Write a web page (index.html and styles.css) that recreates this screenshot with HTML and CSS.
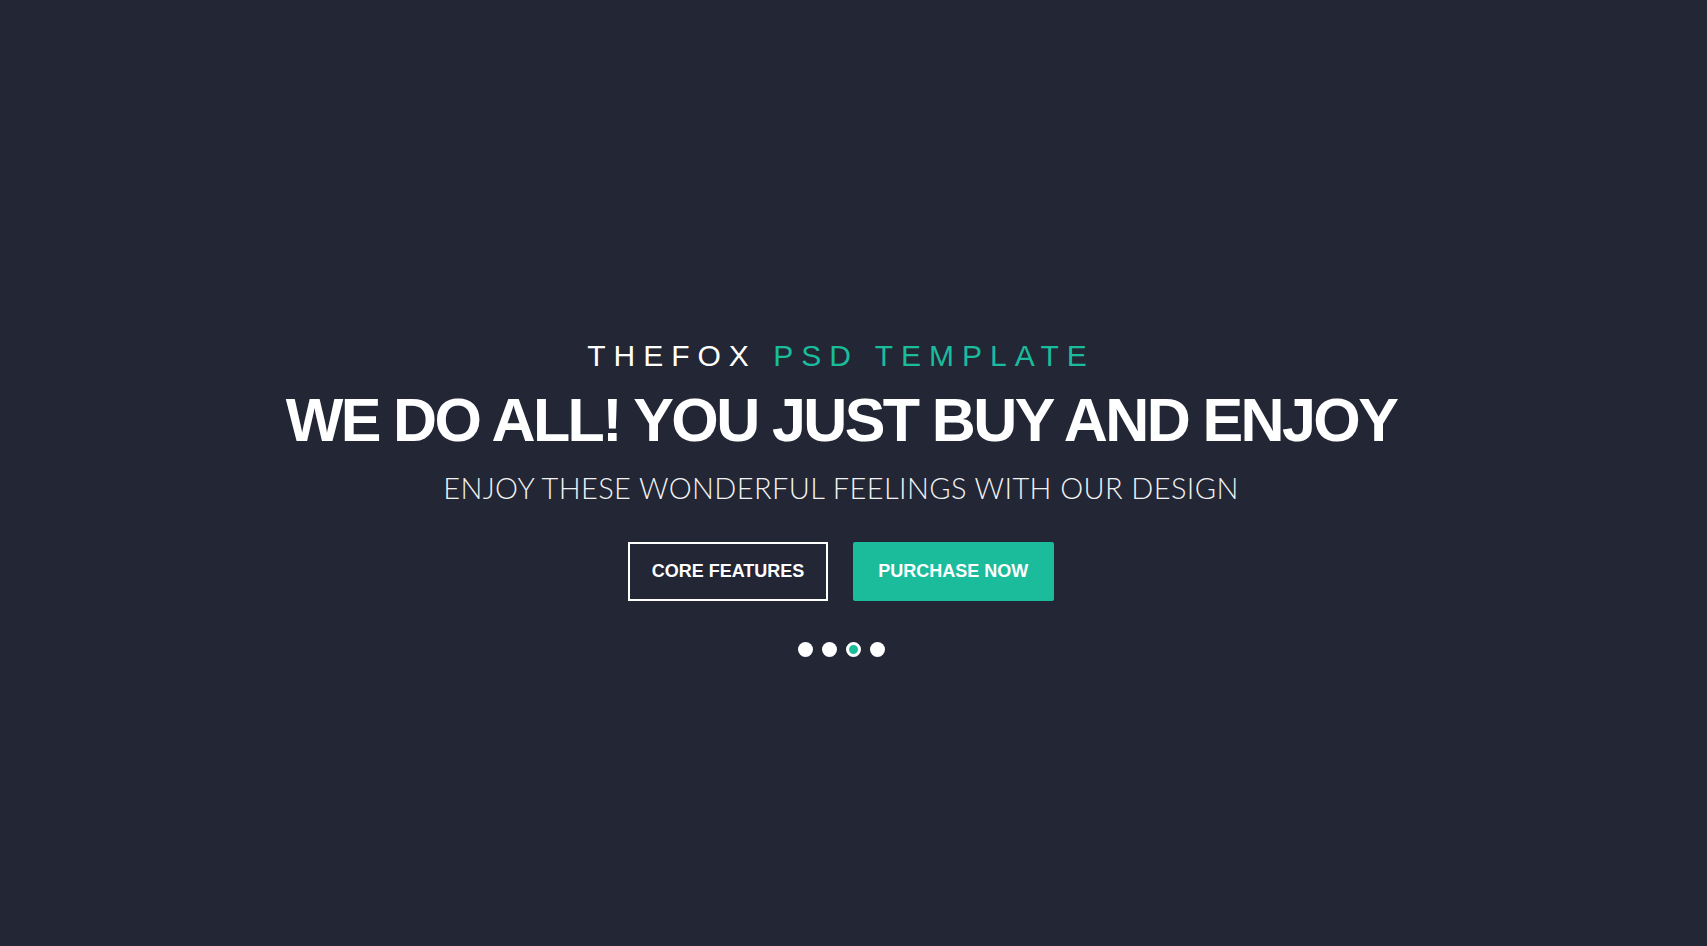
FILE: index.html
```html
<!DOCTYPE html>
<html lang="en">
<head>
<meta charset="utf-8">
<title>TheFox PSD Template</title>
<link rel="stylesheet" href="styles.css">
</head>
<body>
<section class="hero">
  <p class="eyebrow">THEFOX <span class="accent">PSD TEMPLATE</span></p>
  <h1 class="headline">WE DO ALL! YOU JUST BUY AND ENJOY</h1>
  <p class="subtitle">ENJOY THESE WONDERFUL FEELINGS WITH OUR DESIGN</p>
  <div class="actions">
    <a class="btn btn-outline" href="#">CORE FEATURES</a>
    <a class="btn btn-solid" href="#">PURCHASE NOW</a>
  </div>
  <div class="dots">
    <span class="dot"></span>
    <span class="dot"></span>
    <span class="dot dot-active"></span>
    <span class="dot"></span>
  </div>
</section>
</body>
</html>
```
FILE: styles.css
```css
html, body {
  margin: 0;
  padding: 0;
  background: #222635;
}

.hero {
  box-sizing: border-box;
  min-height: 946px;
  padding: 341px 25px 0 0;
  display: flex;
  flex-direction: column;
  align-items: center;
  color: #ffffff;
  font-family: "Liberation Sans", Arial, sans-serif;
}

.eyebrow {
  margin: 0;
  font-size: 30px;
  line-height: 30px;
  letter-spacing: 8px;
  font-weight: 400;
  color: #ffffff;
}

.accent {
  color: #1abc9c;
}

.headline {
  margin: 19px 0 0;
  font-size: 61px;
  line-height: 61px;
  font-weight: 700;
  letter-spacing: -2.6px;
  color: #ffffff;
}

.subtitle {
  margin: 22px 0 0;
  font-family: Lato, "Liberation Sans", sans-serif;
  font-weight: 300;
  font-size: 29px;
  line-height: 29px;
  letter-spacing: 0.4px;
  color: #f2f2f2;
}

.actions {
  margin-top: 40px;
  display: flex;
  gap: 25px;
}

.btn {
  box-sizing: border-box;
  height: 59px;
  display: flex;
  align-items: center;
  justify-content: center;
  font-size: 18px;
  font-weight: 700;
  color: #ffffff;
  text-decoration: none;
}

.btn-outline {
  border: 2px solid #ffffff;
  padding: 0 21.5px;
}

.btn-solid {
  background: #1abc9c;
  padding: 0 25.5px;
  border-radius: 2px;
}

.dots {
  margin-top: 41px;
  display: flex;
  gap: 9px;
}

.dot {
  box-sizing: border-box;
  width: 15px;
  height: 15px;
  border-radius: 50%;
  background: #ffffff;
}

.dot-active {
  background: #1abc9c;
  border: 3.5px solid #ffffff;
}
```
